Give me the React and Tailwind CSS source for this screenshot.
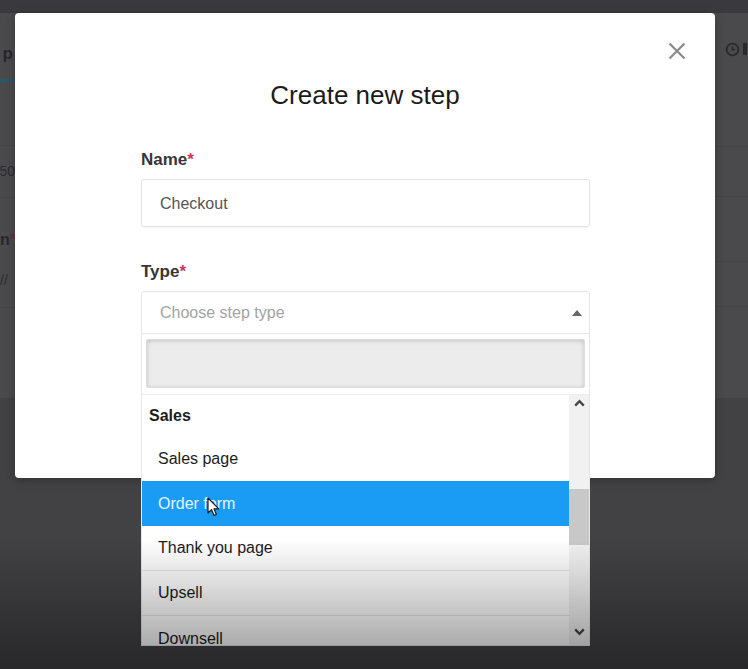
import React from 'react'

const font = "font-['Liberation_Sans',Arial,sans-serif]"

function Chevron({ up }) {
  return (
    <svg width="11" height="8" viewBox="0 0 11 8" className="block">
      <path
        d={up ? 'M1.2 6.6 L5.5 2.2 L9.8 6.6' : 'M1.2 1.4 L5.5 5.8 L9.8 1.4'}
        fill="none"
        stroke="#454545"
        strokeWidth="2.3"
      />
    </svg>
  )
}

function Cursor() {
  return (
    <svg width="13" height="20" viewBox="0 0 13 20" className="absolute left-[207px] top-[497px] z-30">
      <path
        d="M1 1 L1 16 L4.5 12.6 L7 18.5 L9.4 17.5 L7 11.8 L11.8 11.8 Z"
        fill="#ffffff"
        stroke="#1a1a1a"
        strokeWidth="1.2"
        strokeLinejoin="round"
      />
    </svg>
  )
}

export default function App() {
  const items = [
    { label: 'Sales page', h: 'h-[44px]' },
    { label: 'Order form', h: 'h-[45px]', active: true },
    { label: 'Thank you page', h: 'h-[45px]', line: true },
    { label: 'Upsell', h: 'h-[45px]', line: true },
    { label: 'Downsell', h: 'h-[45px]' },
  ]

  return (
    <div className={`relative h-[669px] w-[748px] overflow-hidden bg-[#424245] ${font}`}>
      {/* dimmed page behind the modal */}
      <div className="h-[13px] bg-[#3a3a3e]" />
      <div className="flex h-[385px] justify-between bg-[#4a4a4d]">
        <div className="w-[15px] overflow-hidden">
          <div className="flex h-[55px] items-end justify-end pb-[4px] pr-[2px]">
            <span className="text-[17px] font-bold leading-[20px] text-[#26262a]">p</span>
          </div>
          <div className="h-[11px]" />
          <div className="h-[3px] bg-[#2a5670]" />
          <div className="h-[64px] border-b border-[#444447]" />
          <div className="flex h-[52px] items-center justify-end border-b border-[#444447]">
            <span className="text-[14px] text-[#2c2c30]">50</span>
          </div>
          <div className="flex h-[56px] items-end pb-[4px]">
            <span className="text-[16px] font-bold leading-[20px] text-[#26262a]">
              n<span className="text-[#6e2a3c]">*</span>
            </span>
          </div>
          <div className="flex h-[54px] items-center border-b border-[#444447]">
            <span className="text-[14px] text-[#2c2c30]">//</span>
          </div>
        </div>
        <div className="w-[33px]">
          <div className="flex h-[74px] items-center gap-[3px] pl-[10px] pb-[2px]">
            <svg width="15" height="15" viewBox="0 0 16 16">
              <circle cx="8" cy="8" r="6.3" fill="none" stroke="#2a2a2d" strokeWidth="2" />
              <path d="M8 4.5 V8.3 H10.6" fill="none" stroke="#2a2a2d" strokeWidth="1.6" />
            </svg>
            <div className="h-[12px] w-[4px] bg-[#2a2a2d]" />
          </div>
          <div className="h-[60px] border-b border-[#444447]" />
          <div className="h-[50px] border-b border-[#444447]" />
          <div className="h-[65px] border-b border-[#444447]" />
          <div className="h-[45px] border-b border-[#444447]" />
        </div>
      </div>

      {/* modal */}
      <div className="absolute left-[15px] top-[13px] h-[465px] w-[700px] rounded-[4px] bg-white shadow-[0_2px_10px_rgba(0,0,0,0.25)]">
        <button className="absolute left-[653px] top-[29px] p-0">
          <svg width="18" height="18" viewBox="0 0 18 18" className="block">
            <path d="M1.5 1.5 L16.5 16.5 M16.5 1.5 L1.5 16.5" stroke="#8a8a8a" strokeWidth="2.2" />
          </svg>
        </button>

        <div className="pt-[66px] text-center">
          <h2 className="text-[26px] leading-[32px] text-[#1b1b1b]">Create new step</h2>
        </div>

        <div className="ml-[126px] mt-[38px] w-[449px]">
          <label className="block h-[22px] text-[17px] font-bold leading-[22px] text-[#363636]">
            Name<span className="text-[#c8385e]">*</span>
          </label>
          <div className="mt-[8px] flex h-[48px] items-center rounded-[3px] border border-[#e4e4e4] pl-[18px] pt-[2px] text-[16px] text-[#555555] shadow-[0_1px_2px_rgba(0,0,0,0.04)]">
            Checkout
          </div>

          <label className="mt-[34px] block h-[22px] text-[17px] font-bold leading-[22px] text-[#363636]">
            Type<span className="text-[#c8385e]">*</span>
          </label>
          <div className="relative mt-[8px]">
            <div className="flex h-[43px] items-center justify-between rounded-t-[3px] border border-[#e6e6e6] pl-[18px] pr-[7px] text-[16px] text-[#a3a3a3]">
              <span>Choose step type</span>
              <svg width="10" height="6" viewBox="0 0 10 6">
                <path d="M0 6 L5 0 L10 6 Z" fill="#666666" />
              </svg>
            </div>

            {/* dropdown */}
            <div className="absolute left-0 top-full z-10 w-[449px] border border-t-0 border-[#e6e6e6] bg-white">
              <div className="border-b border-[#eeeeee] px-[4px] pb-[6px] pt-[5px]">
                <div className="h-[49px] rounded-[2px] border border-[#dcdcdc] bg-[#ececec] shadow-[inset_0_1px_4px_rgba(0,0,0,0.18)]" />
              </div>
              <div className="flex h-[250px] overflow-hidden">
                <div className="flex-1 overflow-hidden">
                  <div className="flex h-[42px] items-center pl-[7px] text-[16px] font-bold text-[#1c1c1c]">
                    Sales
                  </div>
                  {items.map((it) => (
                    <div
                      key={it.label}
                      className={`flex ${it.h} items-center pl-[16px] text-[16px] ${
                        it.active
                          ? 'bg-[#1a9bf4] text-[#e6f6ff]'
                          : 'text-[#1c1c1c]'
                      } ${it.line ? 'border-b border-[#e6e6e6]' : ''}`}
                    >
                      {it.label}
                    </div>
                  ))}
                </div>
                <div className="relative w-[20px] bg-[#f1f1f1]">
                  <div className="flex justify-center pt-[4px]">
                    <Chevron up />
                  </div>
                  <div className="absolute left-0 top-[94px] h-[56px] w-[20px] bg-[#c8c8c8]" />
                  <div className="absolute bottom-[9px] left-0 flex w-[20px] justify-center">
                    <Chevron />
                  </div>
                </div>
              </div>
            </div>
          </div>
        </div>
      </div>

      <Cursor />

      {/* video vignette at the bottom */}
      <div className="pointer-events-none absolute bottom-0 left-0 right-0 z-20 h-[130px] bg-linear-to-b from-transparent to-black/40" />
    </div>
  )
}
